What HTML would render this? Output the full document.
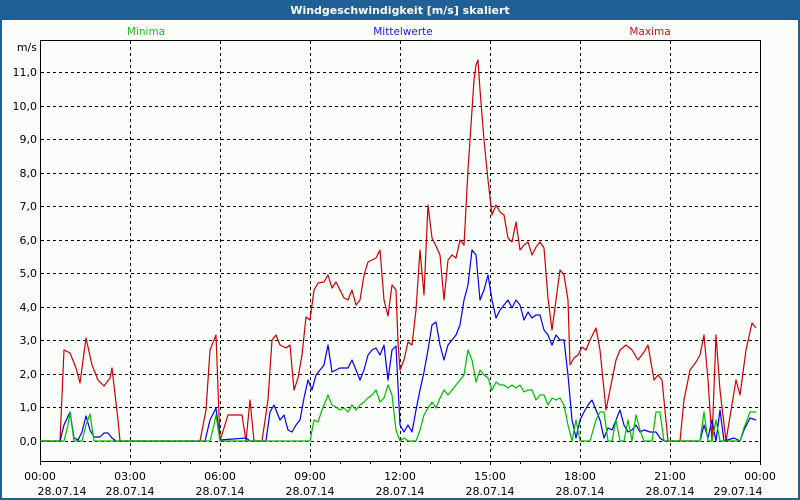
<!DOCTYPE html><html><head><style>
body{margin:0;width:800px;height:500px;overflow:hidden;background:#fbfdfb;font-family:"DejaVu Sans","Liberation Sans",sans-serif}
</style></head><body>
<svg width="800" height="500" xmlns="http://www.w3.org/2000/svg" style="display:block;font-family:'DejaVu Sans','Liberation Sans',sans-serif">
<rect width="800" height="500" fill="#1f6096"/>
<rect x="2" y="20" width="796" height="478" fill="#fbfdfb"/>
<text x="400" y="14" fill="#fff" font-size="11" font-weight="bold" text-anchor="middle">Windgeschwindigkeit [m/s] skaliert</text>
<text x="146" y="35" fill="#22bb22" font-size="10.5" text-anchor="middle">Minima</text>
<text x="403" y="35" fill="#2222ee" font-size="10.5" text-anchor="middle">Mittelwerte</text>
<text x="650" y="35" fill="#cc1111" font-size="10.5" text-anchor="middle">Maxima</text>
<g stroke="#000" stroke-width="1" stroke-dasharray="3,3" shape-rendering="crispEdges">
<path d="M130.5 41V461M220.5 41V461M310.5 41V461M400.5 41V461M490.5 41V461M580.5 41V461M670.5 41V461"/>
<path d="M41 72.5H760M41 106.5H760M41 139.5H760M41 173.5H760M41 206.5H760M41 240.5H760M41 273.5H760M41 307.5H760M41 340.5H760M41 374.5H760M41 407.5H760M41 441.5H760"/>
</g>
<g stroke="#000" fill="none" shape-rendering="crispEdges">
<path d="M40.5 461V40.5H760.5V461" />
<path d="M40 461.5H761" />
<path d="M40.5 461v4M70.5 461v3M100.5 461v3M130.5 461v4M160.5 461v3M190.5 461v3M220.5 461v4M250.5 461v3M280.5 461v3M310.5 461v4M340.5 461v3M370.5 461v3M400.5 461v4M430.5 461v3M460.5 461v3M490.5 461v4M520.5 461v3M550.5 461v3M580.5 461v4M610.5 461v3M640.5 461v3M670.5 461v4M700.5 461v3M730.5 461v3M760.5 461v4"/>
</g>
<g font-size="11" fill="#000" text-anchor="end">
<text x="37" y="51">m/s</text>
<text x="37" y="76">11,0</text><text x="37" y="110">10,0</text><text x="37" y="143">9,0</text><text x="37" y="177">8,0</text><text x="37" y="210">7,0</text><text x="37" y="244">6,0</text><text x="37" y="277">5,0</text><text x="37" y="311">4,0</text><text x="37" y="344">3,0</text><text x="37" y="378">2,0</text><text x="37" y="411">1,0</text><text x="37" y="445">0,0</text>
</g>
<g font-size="11" fill="#000" text-anchor="middle">
<text x="40" y="480">00:00</text><text x="130" y="480">03:00</text><text x="220" y="480">06:00</text><text x="310" y="480">09:00</text><text x="400" y="480">12:00</text><text x="490" y="480">15:00</text><text x="580" y="480">18:00</text><text x="670" y="480">21:00</text><text x="760" y="480">00:00</text>
<text x="62" y="495">28.07.14</text><text x="130" y="495">28.07.14</text><text x="220" y="495">28.07.14</text><text x="310" y="495">28.07.14</text><text x="400" y="495">28.07.14</text><text x="490" y="495">28.07.14</text><text x="580" y="495">28.07.14</text><text x="670" y="495">28.07.14</text><text x="738" y="495">29.07.14</text>
</g>
<g fill="none" stroke-width="1.2" stroke-linejoin="round">
<polyline stroke="#cc0000" points="40,441 60,441 64,350 70,353 76,368 80,383 86,338 92,365 98,380 104,386 110,378 112,368 118,420 120,441 200,441 206,410 210,350 216,335 220,441 228,415 242,415 246,441 250,400 254,441 262,441 268,400 272,340 276,335 280,345 286,348 290,345 294,390 298,378 302,355 306,317 310,320 314,290 318,283 324,282 328,275 332,288 336,282 340,290 344,298 348,300 352,290 356,305 360,300 364,275 368,262 372,260 376,258 380,250 384,300 388,316 392,285 396,290 398,342 400,370 404,360 408,342 412,345 416,310 420,250 424,295 428,205 432,238 436,246 440,255 444,300 448,260 452,255 456,258 460,240 464,245 468,170 472,110 474,80 476,65 478,60 480,90 484,140 488,180 492,215 496,205 500,212 504,215 508,238 512,242 516,222 520,250 524,245 528,242 532,255 536,247 540,242 544,248 548,298 552,330 556,300 560,270 564,275 568,300 570,365 574,358 578,355 582,347 586,350 590,340 596,328 600,350 606,410 610,390 616,360 620,350 626,345 632,350 638,360 644,352 648,345 654,380 658,375 662,380 668,441 680,441 684,400 690,370 696,362 700,355 704,335 708,380 712,441 716,335 720,390 726,441 736,380 740,395 746,350 752,323 756,328"/>
<polyline stroke="#0000ee" points="40,441 60,441 64,425 70,412 74,438 78,440 82,432 86,416 90,430 94,437 100,437 104,433 108,433 112,438 116,441 205,441 210,420 216,408 220,440 246,438 250,441 266,441 270,412 274,405 280,420 284,415 288,430 292,432 296,425 300,420 304,398 308,380 312,390 316,375 320,370 324,365 328,345 332,372 336,370 340,368 344,368 348,368 352,360 356,370 360,380 364,370 368,355 372,350 376,348 380,355 384,345 388,380 392,350 396,346 400,425 404,432 408,425 412,432 416,410 420,390 424,372 428,350 432,325 436,322 440,345 444,360 448,345 452,340 456,335 460,325 464,300 468,285 472,250 476,255 480,300 484,290 488,275 492,300 496,318 500,310 504,305 508,300 512,308 516,300 520,305 524,320 528,312 532,318 536,315 540,315 544,330 548,335 552,345 556,335 560,340 564,340 568,375 572,420 576,438 580,420 584,412 588,405 592,400 596,410 600,420 604,438 608,428 612,430 616,420 620,410 624,425 628,432 632,430 636,425 640,432 644,430 650,432 656,432 660,438 664,441 700,441 704,425 708,438 712,420 716,441 720,410 724,441 734,438 740,441 744,430 750,418 756,420"/>
<polyline stroke="#00bb00" points="40,441 64,441 68,425 70,412 74,441 82,441 86,425 90,414 94,441 210,441 214,425 216,415 220,441 310,441 314,420 318,422 322,410 328,395 332,405 336,407 340,410 344,408 348,412 352,405 356,410 360,405 364,402 368,398 372,395 376,390 380,402 384,398 388,385 392,395 396,430 400,441 404,438 408,441 416,441 420,430 424,415 428,408 432,402 436,408 440,398 444,390 448,395 452,390 456,385 460,380 464,375 468,350 472,360 476,382 480,370 484,375 488,378 492,390 496,382 500,385 504,385 508,388 512,385 516,388 520,385 524,392 528,390 532,390 536,400 540,395 544,395 548,405 552,398 556,400 560,398 564,405 568,425 572,441 576,420 580,441 590,441 596,420 600,412 604,412 608,441 612,441 616,420 620,441 624,441 628,420 632,441 636,415 640,430 644,441 652,441 656,412 660,412 664,441 700,441 704,412 708,441 712,441 716,420 720,441 740,441 744,428 750,412 756,412"/>
</g>
</svg>
</body></html>
